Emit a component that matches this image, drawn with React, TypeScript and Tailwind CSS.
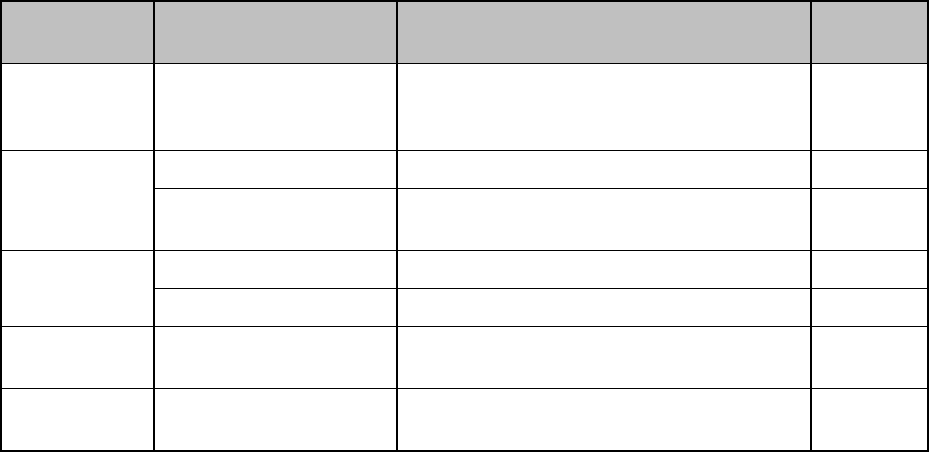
export default function App() {
  const head = "bg-[#c0c0c0]";
  const cell = "bg-white";
  return (
    <div className="w-[929px] h-[452px] bg-white">
      <div
        className="grid bg-black p-[2px] gap-x-[2px] gap-y-[1px] grid-cols-[151px_241px_412px_115px] grid-rows-[61px_86px_37px_61px_37px_37px_61px_61px]"
      >
        <div className={head} />
        <div className={head} />
        <div className={head} />
        <div className={head} />

        <div className={cell} />
        <div className={cell} />
        <div className={cell} />
        <div className={cell} />

        <div className={`${cell} row-span-2`} />
        <div className={cell} />
        <div className={cell} />
        <div className={cell} />
        <div className={cell} />
        <div className={cell} />
        <div className={cell} />

        <div className={`${cell} row-span-2`} />
        <div className={cell} />
        <div className={cell} />
        <div className={cell} />
        <div className={cell} />
        <div className={cell} />
        <div className={cell} />

        <div className={cell} />
        <div className={cell} />
        <div className={cell} />
        <div className={cell} />

        <div className={cell} />
        <div className={cell} />
        <div className={cell} />
        <div className={cell} />
      </div>
    </div>
  );
}
